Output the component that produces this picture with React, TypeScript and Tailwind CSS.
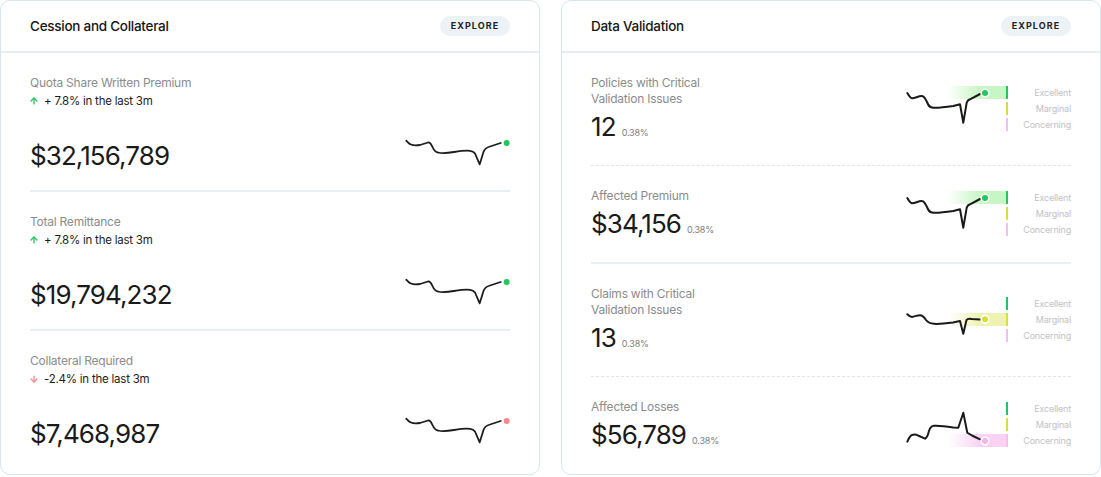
import { ArrowDown, ArrowUp } from "lucide-react";

const font = { fontFamily: "Inter, 'Noto Sans', sans-serif" };

type Trend = "up" | "down";

const cession: { label: string; change: string; trend: Trend; value: string }[] = [
  { label: "Quota Share Written Premium", change: "+ 7.8% in the last 3m", trend: "up", value: "$32,156,789" },
  { label: "Total Remittance", change: "+ 7.8% in the last 3m", trend: "up", value: "$19,794,232" },
  { label: "Collateral Required", change: "-2.4% in the last 3m", trend: "down", value: "$7,468,987" },
];

const leftLine =
  "M2.3 5.7 C4 7 5 9 7 9.5 C10 11 13 10.5 16 10 L24 7.5 C26.5 7 27 9 28.5 12 C30 15.5 31 17 34 17.5 C38 18.5 44 18 50 17 C56 16 62 15.2 66 15.8 C69 16.2 70 17 71 18.5 L75.7 29.3 L79.5 17 C80.5 14 82 12.5 86 11.5 L96.7 8";

function Sparkline({ dot }: { dot: string }) {
  return (
    <svg width="106" height="36" viewBox="0 3 106 36" fill="none">
      <path d={leftLine} stroke="#1c1c1c" strokeWidth="1.8" strokeLinecap="round" strokeLinejoin="round" />
      <circle cx="102.7" cy="8" r="3" fill={dot} />
    </svg>
  );
}

const levels = [
  { name: "Excellent", bar: "#22c55e", band: "#c8f5c4", dot: "#22c55e" },
  { name: "Marginal", bar: "#d5df3d", band: "#eef4b0", dot: "#d5df3d" },
  { name: "Concerning", bar: "#f8bdec", band: "#fbd2f3", dot: "#f7b3ea" },
];

const upLine =
  "M2.3 7 C4 10 5 12 7 12.3 C10 12.5 13 10 16.7 10 C19 10 20 12 22 16 C23.5 19.5 24 21 27 21.5 C30 22.3 38 21.5 48.3 20 L55 18.3 L58.3 36.7 L61.7 16.7 C62.5 14.5 63 13.8 65 13.3 L75 8";

const validation = [
  { label: ["Policies with Critical", "Validation Issues"], value: "12", level: 0, dotY: 7, line: upLine },
  { label: ["Affected Premium"], value: "$34,156", level: 0, dotY: 7, line: upLine },
  {
    label: ["Claims with Critical", "Validation Issues"],
    value: "13",
    level: 1,
    dotY: 22.3,
    line: "M2.3 17.3 C4 19 5 20 7 20 C10 19.5 13 18 15.5 18.3 C18 18.7 19 20 21 23 C23 25.5 25 26.5 29 26.8 C35 27.2 42 26.3 48 25.5 L55 24 L58.3 36.7 L61.5 23 C62.5 21.5 64 21.3 66.7 22 L75 22.5",
  },
  {
    label: ["Affected Losses"],
    value: "$56,789",
    level: 2,
    dotY: 39,
    line: "M2.3 39.7 C4 36 5 33.5 7 33 C9 32.3 11 32.3 13 33.5 L20 36.7 C22 36 23 33 24 29 C25 25.5 26.5 24 29 23.8 C34 23.5 42 24.5 48.3 25.5 L53.3 25.7 L58.3 10.7 L62.3 30.7 C63 31.5 65 32.5 68 34 L75 37.3",
  },
];

function LevelChart({ idx, level, dotY, line }: { idx: number; level: number; dotY: number; line: string }) {
  const l = levels[level];
  return (
    <div className="flex items-start">
      <svg width="103" height="46" viewBox="0 0 103 46" fill="none">
        <defs>
          <linearGradient id={`band-${idx}`} x1="0" x2="1" y1="0" y2="0">
            <stop offset="0" stopColor={l.band} stopOpacity="0" />
            <stop offset="0.55" stopColor={l.band} stopOpacity="1" />
            <stop offset="1" stopColor={l.band} stopOpacity="1" />
          </linearGradient>
        </defs>
        <rect x="43" y={level * 16} width="58" height="13" fill={`url(#band-${idx})`} />
        {levels.map((lv, i) => (
          <rect key={lv.name} x="101" y={i * 16} width="2" height="13" fill={lv.bar} />
        ))}
        <path d={line} stroke="#1a1a1a" strokeWidth="2" strokeLinecap="round" strokeLinejoin="round" />
        <circle cx="80" cy={dotY} r="3.8" fill={l.dot} stroke="#ffffff" strokeWidth="1.6" />
      </svg>
      <div className="ml-[5px] flex w-[58px] flex-col gap-[3px]">
        {levels.map((lv) => (
          <span key={lv.name} className="h-[13px] text-right text-[9px] leading-[13px] tracking-[-0.02em] text-[#c2c2c2]">
            {lv.name}
          </span>
        ))}
      </div>
    </div>
  );
}

function Header({ title }: { title: string }) {
  return (
    <div className="flex h-[52px] items-center justify-between border-b-2 border-[#e8eff3] px-[29px]">
      <h2 className="text-[13.5px] font-medium tracking-[-0.02em] text-[#161616]">{title}</h2>
      <button className="flex h-5 w-[70px] items-center justify-center rounded-full bg-[#edf2f7] text-[9px] font-bold tracking-[0.12em] text-[#222]">
        EXPLORE
      </button>
    </div>
  );
}

export default function App() {
  return (
    <div className="flex w-[1101px] items-start gap-[21px] bg-white" style={font}>
      <div className="flex h-[475px] flex-1 flex-col rounded-[10px] border border-[#dbe5eb] bg-white">
        <Header title="Cession and Collateral" />
        <div className="flex flex-col px-[29px]">
          {cession.map((c, i) => (
            <div
              key={c.label}
              className={`flex flex-col pt-[21px] pb-4 ${i < cession.length - 1 ? "border-b-2 border-[#e8eff3]" : ""}`}
            >
              <div className="text-[12px] leading-[18px] tracking-[-0.02em] text-[#8c8c8c]">{c.label}</div>
              <div className="flex items-center gap-[5px] text-[11.5px] leading-[18px] tracking-[-0.02em] text-[#1c1c1c]">
                {c.trend === "up" ? (
                  <ArrowUp size={10} strokeWidth={3.2} color="#22c55e" className="-ml-[1px]" />
                ) : (
                  <ArrowDown size={10} strokeWidth={3.2} color="#f58a8a" className="-ml-[1px]" />
                )}
                <span>{c.change}</span>
              </div>
              <div className="mt-[28px] flex h-9 items-center justify-between">
                <span className="text-[26px] leading-9 tracking-[-0.035em] text-[#1a1a1a]">{c.value}</span>
                <Sparkline dot={c.trend === "up" ? "#22c55e" : "#f58a8a"} />
              </div>
            </div>
          ))}
        </div>
      </div>

      <div className="flex h-[475px] flex-1 flex-col rounded-[10px] border border-[#dbe5eb] bg-white">
        <Header title="Data Validation" />
        <div className="flex flex-col px-[29px]">
          {validation.map((v, i) => (
            <div
              key={v.value}
              className={`flex items-center justify-between py-[22px] ${
                i === 1
                  ? "border-b-2 border-solid border-[#e8eff3]"
                  : i < validation.length - 1
                    ? "border-b border-dashed border-[#dfe6ea]"
                    : ""
              }`}
            >
              <div className="flex flex-col">
                <div className="text-[12px] leading-4 tracking-[-0.02em] text-[#8c8c8c]">
                  {v.label.map((t) => (
                    <div key={t}>{t}</div>
                  ))}
                </div>
                <div className="mt-1 flex items-baseline">
                  <span className="text-[26px] leading-8 tracking-[-0.035em] text-[#1a1a1a]">{v.value}</span>
                  <span className="ml-[6px] text-[9px] tracking-[-0.02em] text-[#7d7d7d]">0.38%</span>
                </div>
              </div>
              <LevelChart idx={i} level={v.level} dotY={v.dotY} line={v.line} />
            </div>
          ))}
        </div>
      </div>
    </div>
  );
}
